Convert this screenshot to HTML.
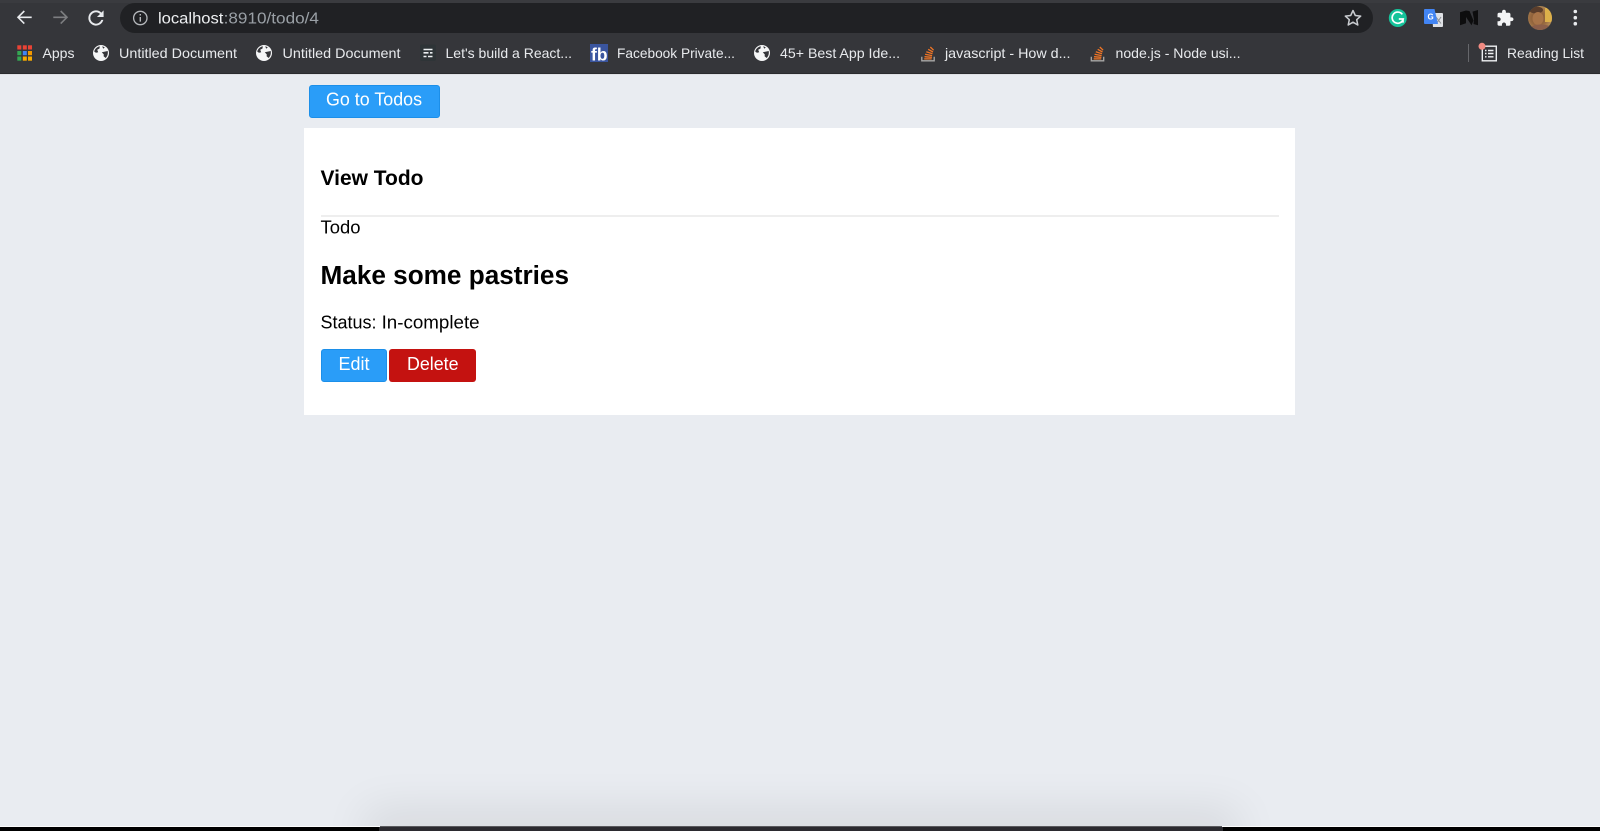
<!DOCTYPE html>
<html lang="en">
<head>
<meta charset="utf-8">
<title>View Todo</title>
<style>
html,body{margin:0;padding:0;width:1600px;height:831px;overflow:hidden;background:#e9ecf1}
.box{position:absolute;box-sizing:border-box}
svg{position:absolute;left:0;top:0;filter:blur(.3px)}
text{font-family:"Liberation Sans",sans-serif}
.t{font-size:14px;fill:#e8eaed}
.b{font-weight:bold;fill:#000}
.r{fill:#000;font-size:18px}
.w{fill:#fff;font-size:18.5px}
</style>
</head>
<body>
<div class="box" style="left:0;top:0;width:1600px;height:73.500px;background:#35363a"></div>
<div class="box" style="left:0;top:0;width:1600px;height:3px;background:#3a3b3f"></div>
<div class="box" style="left:0;top:73px;width:1600px;height:1px;background:#2a2b2e"></div>
<div class="box" style="left:0;top:74px;width:1600px;height:1px;background:#dfe1e5"></div>
<div class="box" style="left:120px;top:3px;width:1253px;height:30px;background:#202124;border-radius:15px"></div>
<div class="box" style="left:304px;top:128px;width:991px;height:287px;background:#fff"></div>
<div class="box" style="left:321px;top:215px;width:958px;height:2px;background:#eeeeee"></div>
<div class="box" style="left:309px;top:84.500px;width:131px;height:33px;background:#2a9df8;border:1px solid #1c8fe9;border-radius:3px"></div>
<div class="box" style="left:321px;top:349px;width:65.500px;height:33px;background:#2a9df8;border:1px solid #1c8fe9;border-radius:3px"></div>
<div class="box" style="left:389px;top:349px;width:87px;height:33px;background:#c41210;border-radius:3px"></div>

<div class="box" style="left:0;top:750px;width:1600px;height:76px;overflow:hidden">
  <div class="box" style="left:381px;top:76px;width:841px;height:10px;box-shadow:0 0 44px 16px rgba(0,0,0,.085)"></div>
</div>
<div class="box" style="left:0;top:826px;width:1600px;height:1px;background:#fbfbfc"></div>
<div class="box" style="left:0;top:827px;width:1600px;height:4px;background:#000"></div>
<div class="box" style="left:380px;top:826px;width:842px;height:1px;background:#5a5a5e"></div>
<div class="box" style="left:379px;top:827px;width:844px;height:4px;background:#2b2a2f"></div>

<svg width="1600" height="831" viewBox="0 0 1600 831" xmlns="http://www.w3.org/2000/svg">
  <!-- nav -->
  <g fill="none" stroke-width="1.600">
    <path d="M31.700 17.300H18.600M24.300 11l-6.300 6.300 6.300 6.300" stroke="#e8eaed"/>
    <path d="M53.300 17.300H66.400M60.700 11l6.300 6.300-6.300 6.300" stroke="#7d7e81"/>
  </g>
  <path transform="translate(84.600 6.600) scale(.95)" fill="#e8eaed" d="M17.650 6.350A7.960 7.960 0 0 0 12 4a8 8 0 1 0 7.730 10h-2.080A6 6 0 1 1 12 6c1.660 0 3.140.69 4.220 1.780L13 11h7V4l-2.350 2.350z"/>
  <circle cx="140.300" cy="18" r="6.700" fill="none" stroke="#b5b8bc" stroke-width="1.300"/>
  <path d="M140.300 17v4.600M140.300 14v1.500" stroke="#b5b8bc" stroke-width="1.400"/>
  <text x="158" y="23.300" font-size="15.500" fill="#eef0f2" textLength="65.400" lengthAdjust="spacingAndGlyphs">localhost</text>
  <text x="223.600" y="23.300" font-size="15.500" fill="#9aa0a6" textLength="95.400" lengthAdjust="spacingAndGlyphs">:8910/todo/4</text>

  <!-- right toolbar -->
  <path d="M1353 10.500l2.300 5 5.400.6-4 3.600 1.100 5.300-4.800-2.800-4.800 2.800 1.100-5.300-4-3.600 5.400-.6z" fill="none" stroke="#c9ccd0" stroke-width="1.500" stroke-linejoin="round"/>
  <circle cx="1397.800" cy="18" r="9" fill="#15c39a"/>
  <path d="M1402.300 14.400a5.600 5.600 0 1 0 .9 4.600h-4.400M1403 19v3.600" fill="none" stroke="#fff" stroke-width="1.700"/>
  <path d="M1432 13h10a1 1 0 0 1 1 1v12a1 1 0 0 1-1 1h-9z" fill="#dfe1e5"/>
  <path d="M1436 17l5 6.500M1441 17l-4.500 6.500" stroke="#8a8d92" stroke-width="1"/>
  <path d="M1425 9h9.500l3.500 15h-13a1 1 0 0 1-1-1V10a1 1 0 0 1 1-1z" fill="#4285f4"/>
  <text x="1427.500" y="19.500" font-size="8" font-weight="bold" fill="#fff">G</text>
  <path d="M1460 12.300L1466 10.500V23.300L1460 25.300zM1466 10.500L1469.500 11 1473.500 20.500 1471.500 25.300 1466 17zM1472.500 11.600L1478 10V25.300L1473.500 24 1474 19.500z" fill="#0d0d0e"/>
  <path transform="translate(1496 9) scale(.76)" fill="#f4f5f6" d="M20.500 11H19V7c0-1.100-.9-2-2-2h-4V3.500C13 2.120 11.880 1 10.500 1S8 2.120 8 3.500V5H4c-1.100 0-1.990.9-1.990 2v3.800H3.500c1.490 0 2.700 1.210 2.700 2.700s-1.210 2.700-2.700 2.700H2V20c0 1.100.9 2 2 2h3.800v-1.500c0-1.490 1.210-2.700 2.700-2.700 1.490 0 2.700 1.210 2.700 2.700V22H17c1.100 0 2-.9 2-2v-4h1.500c1.380 0 2.500-1.120 2.500-2.500S21.880 11 20.500 11z"/>
  <defs>
    <radialGradient id="av" cx=".42" cy=".5" r=".6">
      <stop offset="0" stop-color="#7a5030"/><stop offset=".55" stop-color="#96683f"/><stop offset="1" stop-color="#b9935c"/>
    </radialGradient>
    <clipPath id="avc"><circle cx="1540" cy="18" r="12"/></clipPath>
  </defs>
  <g clip-path="url(#avc)">
    <rect x="1528" y="6" width="24" height="24" fill="url(#av)"/>
    <rect x="1545" y="8" width="8" height="14" fill="#dcb04a"/>
    <ellipse cx="1536" cy="10" rx="7" ry="3.500" fill="#5a3d2b"/>
    <ellipse cx="1538" cy="18.500" rx="5.500" ry="6.500" fill="#a87448"/>
    <ellipse cx="1541" cy="28" rx="10" ry="3.500" fill="#8c5f4a"/>
  </g>
  <circle cx="1575.300" cy="11.500" r="1.800" fill="#e8eaed"/>
  <circle cx="1575.300" cy="17.700" r="1.800" fill="#e8eaed"/>
  <circle cx="1575.300" cy="23.700" r="1.800" fill="#e8eaed"/>

  <!-- bookmarks -->
  <g>
    <rect x="17.300" y="45.300" width="4" height="4.200" fill="#ea4335"/><rect x="22.800" y="45.300" width="4" height="4.200" fill="#ea4335"/><rect x="28" y="45.300" width="4" height="4.200" fill="#ea4335"/>
    <rect x="17.300" y="51" width="4" height="4.200" fill="#34a853"/><rect x="22.800" y="51" width="4" height="4.200" fill="#4285f4"/><rect x="28" y="51" width="4" height="4.200" fill="#f29900"/>
    <rect x="17.300" y="56.500" width="4" height="4.200" fill="#34a853"/><rect x="22.800" y="56.500" width="4" height="4.200" fill="#f9ab00"/><rect x="28" y="56.500" width="4" height="4.200" fill="#f9ab00"/>
  </g>
  <text class="t" x="42.500" y="58" textLength="32" lengthAdjust="spacingAndGlyphs">Apps</text>

  <defs>
    <g id="globe">
      <circle cx="0" cy="0" r="8" fill="#f5f6f7"/>
      <path d="M-6.400-2.800C-5.200-4.900-3.500-6.300-1.200-6.800L-1.500-4.500-3.800-3.200-2.800-.8-5-.2-6.700-1.300z" fill="#35363a"/>
      <path d="M.8-.8L6.700-2C7.200.7 6.400 3.200 4.700 5L2.600 3.300 2.800 1.500z" fill="#35363a"/>
      <path d="M1.200-6.800L3.800-5.800 2.200-4.200z" fill="#35363a"/>
    </g>
  </defs>
  <use href="#globe" x="101" y="53"/>
  <text class="t" x="119" y="58" textLength="118" lengthAdjust="spacingAndGlyphs">Untitled Document</text>
  <use href="#globe" x="264" y="53"/>
  <text class="t" x="282.500" y="58" textLength="118" lengthAdjust="spacingAndGlyphs">Untitled Document</text>

  <rect x="420" y="44.500" width="16" height="16.500" rx="2" fill="#2e3437"/>
  <path d="M423.500 49.500h9M423.500 52.800h5M430 52.800h2.500M423.500 56.500h3M428 56.500h4.500" stroke="#eceff1" stroke-width="1.600"/>
  <text class="t" x="445.500" y="58" textLength="126.500" lengthAdjust="spacingAndGlyphs">Let's build a React...</text>

  <rect x="590" y="44" width="18" height="18" fill="#3a559f"/>
  <text x="591" y="60.500" font-size="17.500" font-weight="bold" fill="#fff" textLength="16.500" lengthAdjust="spacingAndGlyphs">fb</text>
  <text class="t" x="617" y="58" textLength="118" lengthAdjust="spacingAndGlyphs">Facebook Private...</text>

  <use href="#globe" x="762" y="53"/>
  <text class="t" x="780" y="58" textLength="120" lengthAdjust="spacingAndGlyphs">45+ Best App Ide...</text>

  <defs>
    <g id="so">
      <path d="M-6.200 2.800V6.800H6.200V2.800" fill="none" stroke="#a9a8a7" stroke-width="1.300"/>
      <path d="M-3.800 4.900H3.700M-3.500 2.700L3.900 3.300M-2.900 .2L4.100 1.600M-1.700-2.300L4.500-.3M.2-4.700L5-2M2.300-7L5.600-3.800" stroke="#f07525" stroke-width="1.300" fill="none"/>
    </g>
  </defs>
  <use href="#so" x="928" y="54"/>
  <text class="t" x="945" y="58" textLength="125.500" lengthAdjust="spacingAndGlyphs">javascript - How d...</text>
  <use href="#so" x="1097.500" y="54"/>
  <text class="t" x="1115.500" y="58" textLength="125" lengthAdjust="spacingAndGlyphs">node.js - Node usi...</text>

  <rect x="1468" y="44" width="1" height="18" fill="#66676b"/>
  <rect x="1482.300" y="46.200" width="14" height="14.600" fill="none" stroke="#eef0f2" stroke-width="1.400"/>
  <path d="M1485 50.500h1.500M1488 50.500h5.500M1485 53.500h1.500M1488 53.500h5.500M1485 56.800h1.500M1488 56.800h5.500" stroke="#eef0f2" stroke-width="1.400"/>
  <circle cx="1482" cy="46.300" r="3.500" fill="#f28b82"/>
  <text class="t" x="1507" y="58" textLength="77" lengthAdjust="spacingAndGlyphs">Reading List</text>

  <!-- content -->
  <text class="w" x="326" y="105.500" textLength="96" lengthAdjust="spacingAndGlyphs">Go to Todos</text>
  <text class="b" x="320.500" y="185" font-size="21.500" textLength="103" lengthAdjust="spacingAndGlyphs">View Todo</text>
  <text class="r" x="320.500" y="233.300" textLength="40" lengthAdjust="spacingAndGlyphs">Todo</text>
  <text class="b" x="320.500" y="284" font-size="25.500" textLength="248.500" lengthAdjust="spacingAndGlyphs">Make some pastries</text>
  <text class="r" x="320.500" y="328.700" textLength="56" lengthAdjust="spacingAndGlyphs">Status:</text>
  <text class="r" x="381.600" y="328.700" textLength="98" lengthAdjust="spacingAndGlyphs">In-complete</text>
  <text class="w" x="338.500" y="370" textLength="31" lengthAdjust="spacingAndGlyphs">Edit</text>
  <text class="w" x="407" y="370" textLength="51.500" lengthAdjust="spacingAndGlyphs">Delete</text>
</svg>
</body>
</html>
